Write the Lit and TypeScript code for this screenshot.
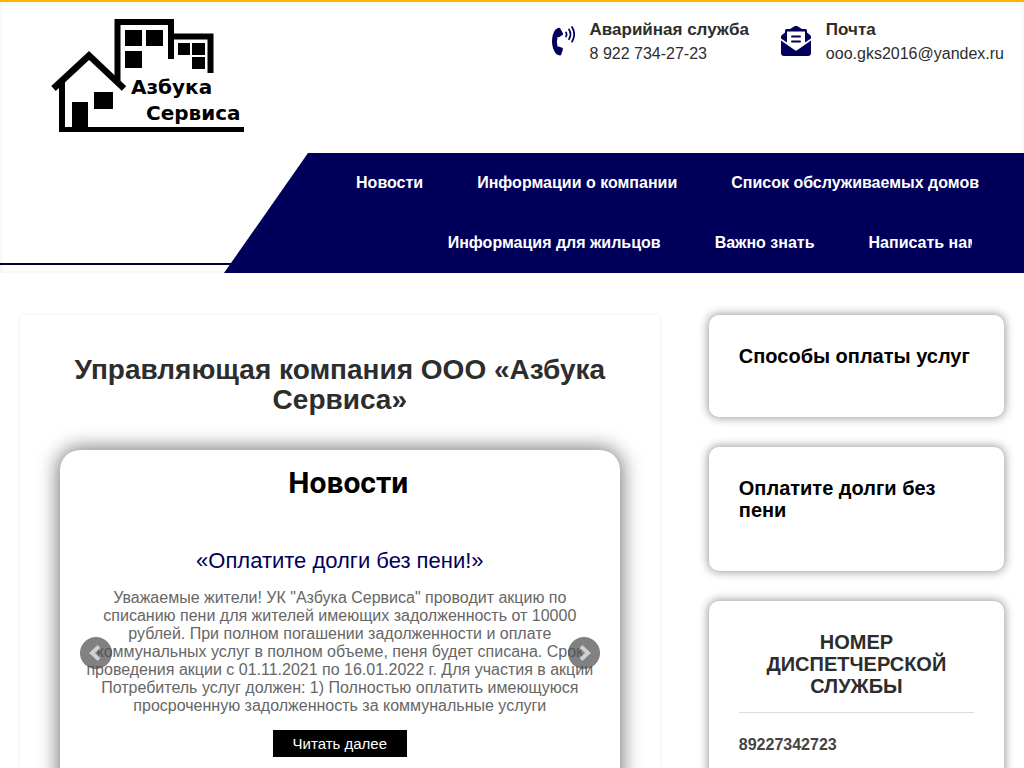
import { LitElement, html, css, svg } from "lit";
import { customElement } from "lit/decorators.js";

const logo = svg`
  <g fill="none" stroke="#000">
    <path d="M1.500 70.500 37 37.500 72 70.500" stroke-width="6.500" />
    <path d="M7 111.500H192" stroke-width="5" />
    <path d="M10 63V112" stroke-width="6" />
    <path d="M65.500 65V4H119V41" stroke-width="6" />
    <path d="M119 18.500H158.500V55" stroke-width="6" />
  </g>
  <g fill="#000">
    <path d="M73 12h17v16H73zM94 12h17v16H94zM73 33h17v17H73z" />
    <path d="M126 25h12v12h-12zM140 25h13v12h-13zM140 39h13v12h-13z" />
    <path d="M42 74h19v17H42zM20 84h16v26H20z" />
  </g>
  <text x="79" y="76" class="logo-text">Азбука</text>
  <text x="94" y="102" class="logo-text">Сервиса</text>`;

@customElement("app-root")
export class AppRoot extends LitElement {
  static styles = css`
    :host {
      display: flex;
      flex-direction: column;
      height: 100vh;
      overflow: hidden;
      background: #fff;
      color: #2d2d2d;
      font: 16px/18px "Liberation Sans", Arial, sans-serif;
    }
    *, *::before { box-sizing: border-box; }
    a { color: inherit; text-decoration: none; }
    h1, h2, h3, p, ul { margin: 0; padding: 0; }
    .header {
      border-top: 2px solid #ffb400;
      box-shadow: inset 0 0 5px #eee;
    }
    .top {
      display: flex;
      justify-content: space-between;
      align-items: flex-start;
      min-height: 151px;
      padding: 16px 20px 16px 52px;
    }
    .logo svg { display: block; width: 193px; height: 116px; overflow: visible; }
    .logo-text { font: bold 20px "DejaVu Sans", Tahoma, sans-serif; }
    .contacts { display: flex; gap: 32px; }
    .contact { display: flex; gap: 15px; line-height: 24px; }
    .contact b { display: block; font-size: 17px; }
    .contact svg { flex: none; margin-top: 8px; height: 30px; fill: #00005a; }
    .nav-row { display: flex; align-items: flex-start; }
    .nav-row::before {
      content: "";
      flex: 0 0 232px;
      height: 112px;
      margin-right: -8px;
      border-bottom: 2px solid #00003c;
    }
    nav {
      flex: 1;
      padding: 0 20px 0 84px;
      background: #00005a;
      clip-path: polygon(84px 0, 100% 0, 100% 100%, 0 100%);
    }
    .menu {
      display: flex;
      flex-wrap: wrap;
      justify-content: flex-end;
      column-gap: 4px;
      list-style: none;
      color: #fff;
      font-weight: bold;
      line-height: 60px;
    }
    .menu a { display: block; padding: 0 25px; }
    .menu .cut { clip-path: inset(0 32px 0 0); }
    .page {
      flex: 1;
      min-height: 0;
      display: flex;
      justify-content: space-between;
      padding: 42px 20px 0;
    }
    .content {
      width: 65%;
      padding: 40px 40px 0;
      box-shadow: 0 0 3px #e8e8e8;
    }
    h1 { font-size: 28px; line-height: 30px; text-align: center; }
    .news {
      height: 100%;
      margin-top: 35px;
      padding: 16px 20px;
      border-radius: 20px;
      background: #fff;
      box-shadow: 0 0 20px 2px #777;
      text-align: center;
    }
    .news h2 {
      padding-left: 17px;
      color: #000;
      font: bold 30px/34px Roboto, sans-serif;
    }
    .slider { position: relative; margin-top: 48px; }
    .slide h3 { color: #00005a; font-size: 22px; font-weight: normal; line-height: 26px; }
    .slide p { margin-top: 15px; color: #666; }
    .more {
      display: inline-block;
      margin-top: 15px;
      padding: 0 20px;
      background: #000;
      color: #fff;
      font-size: 15px;
      line-height: 27px;
    }
    .arrow {
      position: absolute;
      top: 89px;
      width: 32px;
      height: 32px;
      padding: 0;
      border: 0;
      border-radius: 50%;
      background: rgba(80, 80, 80, 0.72);
    }
    .arrow svg { display: block; width: 32px; height: 32px; fill: none; stroke: #d0d0d0; stroke-width: 4; }
    .prev { left: 0; }
    .next { right: 0; }
    aside { display: flex; flex-direction: column; gap: 30px; width: 30%; }
    .card {
      padding: 30px 30px 50px;
      border-radius: 10px;
      background: #fff;
      box-shadow: 0 0 10px 1px #999;
    }
    .card h2 { color: #000; font-size: 20px; line-height: 22px; }
    .card.phone { flex: 1 0 auto; }
    .phone h2 {
      padding-bottom: 15px;
      border-bottom: 1px solid #ddd;
      color: #2d2d2d;
      text-align: center;
    }
    .phone p { margin-top: 23px; font-weight: bold; color: #444; }
  `;

  render() {
    const menu = [
      "Новости",
      "Информации о компании",
      "Список обслуживаемых домов",
      "Информация для жильцов",
      "Важно знать",
      "Написать нам",
    ];
    return html`
      <header class="header">
        <div class="top">
          <a class="logo" href="#" aria-label="Азбука Сервиса">
            <svg viewBox="0 0 193 116">${logo}</svg>
          </a>
          <div class="contacts">
            <div class="contact">
              <svg viewBox="0 0 23 30" width="23">
                <path d="M3.500 3.500 6.500 1.800q1-.5 1.600.5l2.800 4.900q.5 1-.4 1.700L7.300 11q-1 .5-1.700-.2-1.400 4.700 0 10 .8-.6 1.700 0l2.900 1q1 .6.700 1.700L9.200 28.700q-.4 1-1.500.8L4.500 28.300Q0 23 0 15.500T3.500 3.500z" />
                <path d="M14 6.500q1.200 2 0 4M17 3.500q3 4.800 0 9.800M20 1q4.400 7.300 0 14.700" fill="none" stroke="#00005a" stroke-width="1.700" stroke-linecap="round" />
              </svg>
              <div><b>Аварийная служба</b><a href="tel:89227342723">8 922 734-27-23</a></div>
            </div>
            <div class="contact">
              <svg viewBox="0 0 30 30" width="30">
                <path d="M0 14.500 14 24.200q1 .7 2 0L30 14.500V27q0 3-3 3H3q-3 0-3-3zM0 12.500V11q0-1.200.9-2L4 6.600V4.500Q4 3 5.500 3H9l4-2.600q2-1 4 0L21 3h3.500Q26 3 26 4.500v2.100L29.100 9q.9.800.9 2v1.500l-6 4V5.500H6v11zM11 9.500h8q1 0 1 1t-1 1h-8q-1 0-1-1t1-1zm0 5h8q1 0 1 1t-1 1h-8q-1 0-1-1t1-1z" />
              </svg>
              <div><b>Почта</b><a href="mailto:ooo.gks2016@yandex.ru">ooo.gks2016@yandex.ru</a></div>
            </div>
          </div>
        </div>
        <div class="nav-row">
          <nav>
            <ul class="menu">
              ${menu.map((label, i) => html`<li><a href="#" class=${i === menu.length - 1 ? "cut" : ""}>${label}</a></li>`)}
            </ul>
          </nav>
        </div>
      </header>
      <div class="page">
        <main class="content">
          <h1>Управляющая компания ООО «Азбука Сервиса»</h1>
          <section class="news">
            <h2>Новости</h2>
            <div class="slider">
              <article class="slide">
                <h3><a href="#">«Оплатите долги без пени!»</a></h3>
                <p>Уважаемые жители! УК "Азбука Сервиса" проводит акцию по списанию пени для жителей имеющих задолженность от 10000 рублей. При полном погашении задолженности и оплате коммунальных услуг в полном объеме, пеня будет списана. Срок проведения акции с 01.11.2021 по 16.01.2022 г. Для участия в акции Потребитель услуг должен: 1) Полностью оплатить имеющуюся просроченную задолженность за коммунальные услуги</p>
                <a class="more" href="#">Читать далее</a>
              </article>
              <button class="arrow prev" aria-label="Назад"><svg viewBox="0 0 32 32"><path d="M19 9.500 12 16l7 6.500" /></svg></button>
              <button class="arrow next" aria-label="Вперёд"><svg viewBox="0 0 32 32"><path d="M13 9.500 20 16l-7 6.500" /></svg></button>
            </div>
          </section>
        </main>
        <aside>
          <section class="card"><h2><a href="#">Способы оплаты услуг</a></h2></section>
          <section class="card"><h2><a href="#">Оплатите долги без пени</a></h2></section>
          <section class="card phone">
            <h2>НОМЕР ДИСПЕТЧЕРСКОЙ СЛУЖБЫ</h2>
            <p>89227342723</p>
          </section>
        </aside>
      </div>
    `;
  }
}
